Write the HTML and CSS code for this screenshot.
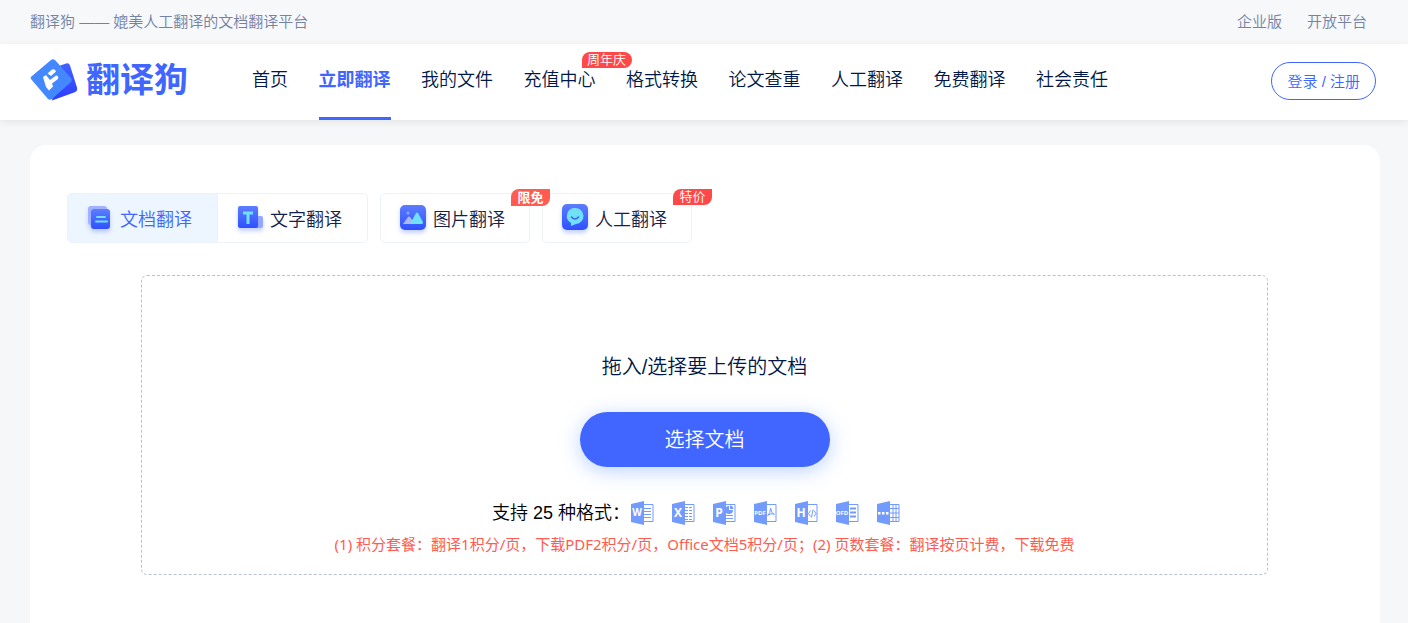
FILE: index.html
```html
<!DOCTYPE html>
<html lang="zh-CN">
<head>
    <meta charset="UTF-8">
    <meta name="viewport" content="width=device-width, initial-scale=1.0">
    <title>翻译狗</title>
    <link rel="stylesheet" href="styles.css">
</head>
<body>
    <div class="topbar">
        <span>翻译狗 —— 媲美人工翻译的文档翻译平台</span>
        <div class="topbar-links">
            <a href="#">企业版</a>
            <a href="#">开放平台</a>
        </div>
    </div>
    <header class="header">
        <a class="logo" href="#">
            <svg width="48" height="42" viewBox="0 0 48 42" aria-hidden="true">
                <defs>
                    <linearGradient id="logoBack" x1="0" y1="0" x2="0" y2="1">
                        <stop offset="0" stop-color="#4062ff"/>
                        <stop offset="1" stop-color="#2e3cff"/>
                    </linearGradient>
                </defs>
                <path d="M29 7l7-2.500q3-1 4 2l7 22q1 4-3 5l-22 8z" fill="url(#logoBack)"/>
                <path d="M2 17L21 1q2-1.500 4 0l16 18q1.500 2 0 4L22 40q-2 1.500-4 0L1 20q-1-1.500 1-3z" fill="#4488ff"/>
                <path d="M17.500 14.500l4.500-4q3-1 4 2l-5 4.500z" fill="#fff"/>
                <path d="M13 18l3-2 4 5 6-4.500q3 0 2 3.500l-6 4.500 1 3-4 4-3-3.500z" fill="#fff"/>
            </svg>
            <span>翻译狗</span>
        </a>
        <nav class="nav">
            <a href="#">首页</a>
            <a class="active" href="#">立即翻译</a>
            <a href="#">我的文件</a>
            <a href="#">充值中心<span class="badge badge-nav">周年庆</span></a>
            <a href="#">格式转换</a>
            <a href="#">论文查重</a>
            <a href="#">人工翻译</a>
            <a href="#">免费翻译</a>
            <a href="#">社会责任</a>
        </nav>
        <button class="login" type="button">登录 / 注册</button>
    </header>
    <main class="card">
        <div class="tabs">
            <div class="tab-group">
                <button class="tab active" type="button">
                    <svg width="28" height="28" viewBox="0 0 28 28" aria-hidden="true">
                        <rect x="2" y="2" width="19" height="19" rx="3" fill="#a0b2ff"/>
                        <rect x="5" y="5" width="19" height="20" rx="3" fill="url(#tabBlue)"/>
                        <path d="M11 13h8M10 17.500h11" stroke="#6fe0f5" stroke-width="2" stroke-linecap="round"/>
                    </svg>
                    文档翻译
                </button>
                <button class="tab" type="button">
                    <svg width="28" height="28" viewBox="0 0 28 28" aria-hidden="true">
                        <rect x="17" y="12" width="10" height="12" rx="2" fill="#93a7ff"/>
                        <rect x="2" y="2" width="20" height="22" rx="2" fill="url(#tabBlue)"/>
                        <path d="M7 9h10M12 9v11" stroke="#6fe0f5" stroke-width="3"/>
                    </svg>
                    文字翻译
                </button>
            </div>
            <button class="tab" type="button">
                <svg width="28" height="28" viewBox="0 0 28 28" aria-hidden="true">
                    <defs>
                        <linearGradient id="tabBlue" x1="0" y1="0" x2="0" y2="1">
                            <stop offset="0" stop-color="#5c7dff"/>
                            <stop offset="1" stop-color="#2f50ff"/>
                        </linearGradient>
                    </defs>
                    <rect x="1" y="1" width="26" height="25" rx="5" fill="url(#tabBlue)"/>
                    <circle cx="9" cy="9" r="1.500" fill="#8ba6ff"/>
                    <path d="M4 20l5-7q1-1 2 0l5 7z" fill="#a9b8ff"/>
                    <path d="M11 20l6-11q1-1 2 0l5 9q0 2-1 2z" fill="#6fe0f5"/>
                </svg>
                图片翻译
                <span class="badge badge-free">限免</span>
            </button>
            <button class="tab" type="button">
                <svg width="28" height="28" viewBox="0 0 28 28" aria-hidden="true">
                    <rect x="1" y="0" width="26" height="26" rx="5" fill="url(#tabBlue)"/>
                    <path d="M14 4a8 8 0 0 1 1 16l-5 2v-3A8 8 0 0 1 14 4z" fill="#6fe0f5"/>
                    <path d="M10.500 13q3.500 4 7 0" fill="none" stroke="#3e62e8" stroke-width="1.500" stroke-linecap="round"/>
                </svg>
                人工翻译
                <span class="badge badge-sale">特价</span>
            </button>
        </div>
        <section class="dropzone">
            <p class="drop-title">拖入/选择要上传的文档</p>
            <button class="choose" type="button">选择文档</button>
            <div class="formats">
                <span>支持 25 种格式：</span>
                <div class="format-icons">
                    <svg class="file" viewBox="0 0 24 24" role="img" aria-label="Word">
                        <path class="page" d="M12 3.500h11v17H12"/>
                        <path class="line" d="M14 7.500h7M14 10.500h7M14 13.500h7M14 16.500h7"/>
                        <path class="cover" d="M1 3l13-3v24L1 21z"/>
                        <text x="7" y="15" font-size="10">W</text>
                    </svg>
                    <svg class="file" viewBox="0 0 24 24" role="img" aria-label="Excel">
                        <path class="page" d="M12 3.500h11v17H12"/>
                        <path class="line" d="M14 6.500h3M18 6.500h3M14 9.500h3M18 9.500h3M14 12.500h3M18 12.500h3M14 15.500h3M18 15.500h3M14 18.500h3M18 18.500h3"/>
                        <path class="cover" d="M1 3l13-3v24L1 21z"/>
                        <text x="7" y="16" font-size="12">X</text>
                    </svg>
                    <svg class="file" viewBox="0 0 24 24" role="img" aria-label="PowerPoint">
                        <path class="page" d="M12 3.500h11v17H12"/>
                        <path class="line" d="M14 14.500h7M14 17.500h7"/>
                        <path d="M17 5a4 4 0 1 0 4 4h-4z" fill="#729bfd"/>
                        <path d="M18 4.500a4 4 0 0 1 3.500 3.500H18z" fill="#729bfd"/>
                        <path class="cover" d="M1 3l13-3v24L1 21z"/>
                        <text x="7" y="16" font-size="12">P</text>
                    </svg>
                    <svg class="file" viewBox="0 0 24 24" role="img" aria-label="PDF">
                        <path class="page" d="M12 3.500h11v17H12"/>
                        <path class="line" d="M17.500 7q1 5 4 7M17.500 7q0 5-3 8M15 14q3-2 6-1"/>
                        <path class="cover" d="M1 3l13-3v24L1 21z"/>
                        <text x="7" y="14" font-size="6">PDF</text>
                    </svg>
                    <svg class="file" viewBox="0 0 24 24" role="img" aria-label="HTML">
                        <path class="page" d="M12 3.500h11v17H12"/>
                        <path class="line" d="M16.500 9.500l-2 3 2 3M20 9.500l2 3-2 3M19 8.500l-1.500 8"/>
                        <path class="cover" d="M1 3l13-3v24L1 21z"/>
                        <text x="7" y="16" font-size="12">H</text>
                    </svg>
                    <svg class="file" viewBox="0 0 24 24" role="img" aria-label="OFD">
                        <path class="page" d="M12 3.500h11v17H12"/>
                        <path class="line" d="M15 7.500h6M15 11.500h6M15 15.500h6" stroke-width="2"/>
                        <path class="cover" d="M1 3l13-3v24L1 21z"/>
                        <text x="7" y="14" font-size="6">OFD</text>
                    </svg>
                    <svg class="file" viewBox="0 0 24 24" role="img" aria-label="更多格式">
                        <path class="page" d="M12 3.500h11v17H12"/>
                        <path class="line" d="M14 7.500h9M14 12h9M14 16.500h9M17 4v16M20 4v16"/>
                        <path class="cover" d="M1 3l13-3v24L1 21z"/>
                        <path d="M2 11h2.500v2.500H2zM6 11h2.500v2.500H6zM10 11h2.500v2.500H10z" fill="#fff"/>
                    </svg>
                </div>
            </div>
            <p class="price">(1) 积分套餐：翻译1积分/页，下载PDF2积分/页，Office文档5积分/页；(2) 页数套餐：翻译按页计费，下载免费</p>
        </section>
    </main>
</body>
</html>
```
FILE: styles.css
```css
* {
    box-sizing: border-box;
}
body {
    display: flex;
    flex-direction: column;
    min-height: 100vh;
    margin: 0;
    background: #f5f7f9;
    color: #001848;
    font-family: "Liberation Sans", "Noto Sans CJK SC", sans-serif;
    font-weight: 350;
}
a {
    color: inherit;
    text-decoration: none;
}
button {
    font-family: inherit;
    font-weight: inherit;
    cursor: pointer;
}
p {
    margin: 0;
}
.topbar {
    display: flex;
    justify-content: space-between;
    height: 44px;
    padding: 0 41px 0 30px;
    background: #f7f8fa;
    color: #7482a5;
    font-size: 15px;
    line-height: 44px;
}
.topbar-links {
    display: flex;
    gap: 25px;
}
.header {
    display: flex;
    align-items: center;
    height: 76px;
    padding: 0 32px 0 30px;
    background: #fff;
    box-shadow: 0 2px 8px rgba(0, 0, 0, 0.08);
}
.logo {
    display: flex;
    align-items: center;
    gap: 8px;
    height: 72px;
    margin-bottom: 4px;
    color: #4066ff;
    font-size: 34px;
    font-weight: 700;
    line-height: 40px;
}
.nav {
    display: flex;
    flex: 0 1 856px;
    justify-content: space-between;
    margin-left: 64px;
    font-size: 18px;
    line-height: 72px;
    white-space: nowrap;
}
.nav a {
    position: relative;
    height: 76px;
}
.nav .active {
    border-bottom: 3px solid #4066ff;
    color: #4066ff;
    font-weight: 700;
}
.login {
    height: 38px;
    margin: 0 0 2px auto;
    padding: 0 15px 2px;
    border: 1px solid #4066ff;
    border-radius: 19px;
    background: #fff;
    color: #4066ff;
    font-size: 15px;
    white-space: nowrap;
}
.badge {
    position: absolute;
    z-index: 1;
    background: #ff4848;
    color: #fff;
    font-size: 13px;
    line-height: 16px;
    text-align: center;
}
.badge-nav {
    top: 8px;
    left: 58px;
    width: 50px;
    border-radius: 8px 8px 8px 0;
}
.badge-free,
.badge-sale {
    top: -5px;
    right: -21px;
    width: 39px;
    border-radius: 8px 0;
}
.badge-free {
    background: #ff5b50;
    font-weight: 700;
    line-height: 17px;
}
.card {
    flex: 1;
    margin: 25px 28px 0 30px;
    padding: 48px 37px;
    border-radius: 16px 16px 0 0;
    background: #fff;
}
.tabs {
    display: flex;
    gap: 12px;
}
.tab-group {
    display: flex;
}
.tab {
    position: relative;
    display: flex;
    align-items: center;
    gap: 6px;
    width: 150px;
    height: 50px;
    padding: 0 0 0 18px;
    border: 1px solid #edf2fa;
    border-radius: 5px;
    background: #fff;
    color: #14224a;
    font-size: 18px;
    white-space: nowrap;
}
.tab svg {
    filter: drop-shadow(0 3px 2px rgba(64, 102, 255, 0.3));
}
.tab-group .tab:first-child {
    width: 151px;
    border-radius: 5px 0 0 5px;
}
.tab-group .tab:last-child {
    border-left: 0;
    border-radius: 0 5px 5px 0;
}
.tab.active {
    background: #edf5ff;
    color: #4066ff;
}
.dropzone {
    display: flex;
    flex-direction: column;
    align-items: center;
    min-height: 300px;
    margin: 32px 75px 0 74px;
    padding-top: 76px;
    border: 1px dashed #b9c0d4;
    border-radius: 6px;
}
.drop-title {
    font-size: 20px;
    line-height: 30px;
}
.choose {
    width: 250px;
    height: 55px;
    margin-top: 30px;
    padding-bottom: 3px;
    border: 0;
    border-radius: 28px;
    background: #4066ff;
    box-shadow: 0 4px 20px rgba(64, 130, 255, 0.35);
    color: #fff;
    font-size: 20px;
}
.formats {
    display: flex;
    align-items: center;
    margin-top: 31px;
    color: #000;
    font-size: 18px;
    line-height: 30px;
}
.format-icons {
    display: flex;
}
.file {
    width: 24px;
    height: 24px;
    margin-right: 17px;
}
.file .page {
    fill: #fff;
    stroke: #729bfd;
}
.file .line {
    fill: none;
    stroke: #729bfd;
}
.file .cover {
    fill: #729bfd;
}
.file text {
    fill: #fff;
    font-family: "Open Sans", sans-serif;
    font-weight: 700;
    text-anchor: middle;
}
.price {
    color: #ff5b50;
    font-family: "Noto Sans", "Noto Sans CJK SC", sans-serif;
    font-size: 15px;
    font-weight: 400;
    line-height: 32px;
}
```
